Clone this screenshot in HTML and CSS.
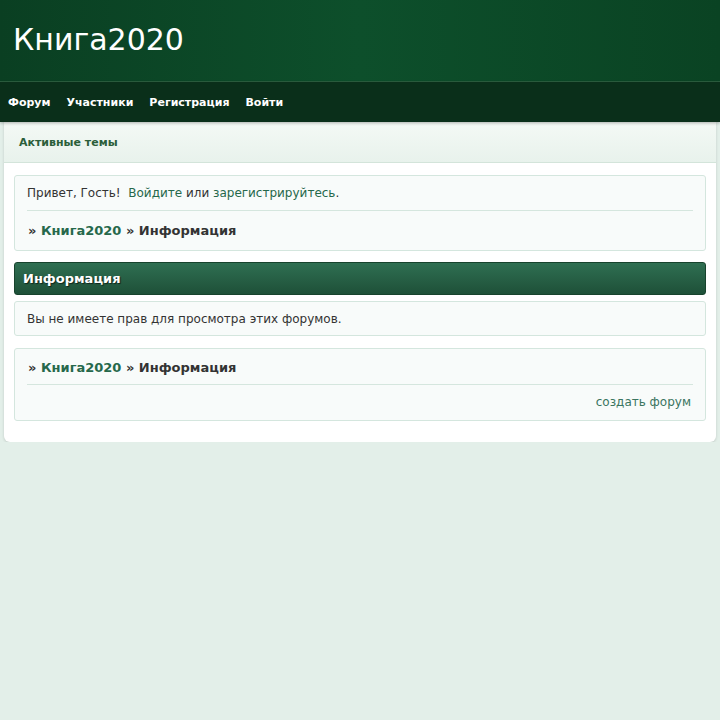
FILE: index.html
```html
<!DOCTYPE html>
<html lang="ru">
<head>
    <meta charset="UTF-8">
    <meta name="viewport" content="width=device-width, initial-scale=1.0">
    <title>Книга2020 - Информация</title>
    <link rel="stylesheet" href="styles.css">
</head>
<body>
    <header class="site-header">
        <h1 class="site-title">Книга2020</h1>
    </header>
    <nav class="main-nav">
        <a href="#">Форум</a>
        <a href="#">Участники</a>
        <a href="#">Регистрация</a>
        <a href="#">Войти</a>
    </nav>

    <div class="wrap">
        <div class="subnav">
            <a href="#">Активные темы</a>
        </div>

        <div class="content">
            <!-- Welcome box -->
            <div class="box">
                <div class="welcome">
                    Привет, Гость!&nbsp; <a href="#">Войдите</a> или <a href="#">зарегистрируйтесь</a>.
                </div>
                <div class="crumbs">
                    » <a href="#">Книга2020</a> » Информация
                </div>
            </div>

            <div class="cat-head">Информация</div>
            <div class="box message">Вы не имеете прав для просмотра этих форумов.</div>

            <div class="box last">
                <div class="crumbs crumbs-top">
                    » <a href="#">Книга2020</a> » Информация
                </div>
                <div class="footer-links">
                    <a href="#">создать форум</a>
                </div>
            </div>
        </div>
    </div>
</body>
</html>
```

FILE: styles.css
```css
body {
    margin: 0;
    font-family: "DejaVu Sans", Verdana, sans-serif;
    font-size: 12px;
    color: #333;
    background: #e3efe9;
}
a {
    color: #26684b;
    text-decoration: none;
}
.site-header {
    height: 81px;
    background: linear-gradient(to right, #0a3f22, #0d4f2b 50%, #0a4323);
    border-bottom: 1px solid #2c5f40;
}
.site-title {
    margin: 0;
    padding: 22px 0 0 13px;
    font-size: 30px;
    font-weight: normal;
    line-height: 36px;
    color: #fff;
}
.main-nav {
    height: 40px;
    display: flex;
    align-items: center;
    gap: 16px;
    padding: 0 8px;
    background: #0a2f1a;
    box-shadow: 0 1px 3px rgba(0, 0, 0, 0.3);
    position: relative;
}
.main-nav a {
    color: #fff;
    font-weight: bold;
    font-size: 11px;
}
.wrap {
    margin: 0 4px;
    background: #fff;
    border-radius: 0 0 6px 6px;
    box-shadow: 0 1px 3px rgba(0, 0, 0, 0.15);
}
.subnav {
    height: 40px;
    display: flex;
    align-items: center;
    padding: 0 15px;
    background: linear-gradient(to bottom, #f4f9f5, #e8f2ec);
    border-bottom: 1px solid #d3e4da;
}
.subnav a {
    color: #2b5e3a;
    font-weight: bold;
    font-size: 11px;
}
.content {
    padding: 12px 10px 21px;
}
.box {
    background: #f8fbfa;
    border: 1px solid #d4e6de;
    border-radius: 3px;
    padding: 0 12px;
    margin-bottom: 11px;
}
.box.last {
    margin-bottom: 0;
}
.welcome {
    padding: 9px 0 9px;
    line-height: 16px;
    border-bottom: 1px solid #d5e6de;
}
.crumbs {
    padding: 11px 1px 10px;
    font-size: 13px;
    font-weight: bold;
    line-height: 18px;
    color: #333;
}
.crumbs a {
    color: #26684b;
}
.crumbs-top {
    padding: 10px 1px 7px;
    border-bottom: 1px solid #d5e6de;
}
.cat-head {
    height: 31px;
    display: flex;
    align-items: center;
    padding: 0 8px;
    background: linear-gradient(to bottom, #2f6f52, #1e5038);
    border: 1px solid #17432d;
    border-radius: 3px;
    color: #fff;
    font-weight: bold;
    font-size: 13px;
    text-shadow: 1px 1px 1px rgba(0, 0, 0, 0.6);
    margin-bottom: 6px;
}
.message {
    padding: 9px 12px 8px;
    line-height: 16px;
    margin-bottom: 12px;
}
.footer-links {
    text-align: right;
    padding: 9px 2px 10px;
    line-height: 16px;
}
.footer-links a {
    color: #3a7560;
}
```
